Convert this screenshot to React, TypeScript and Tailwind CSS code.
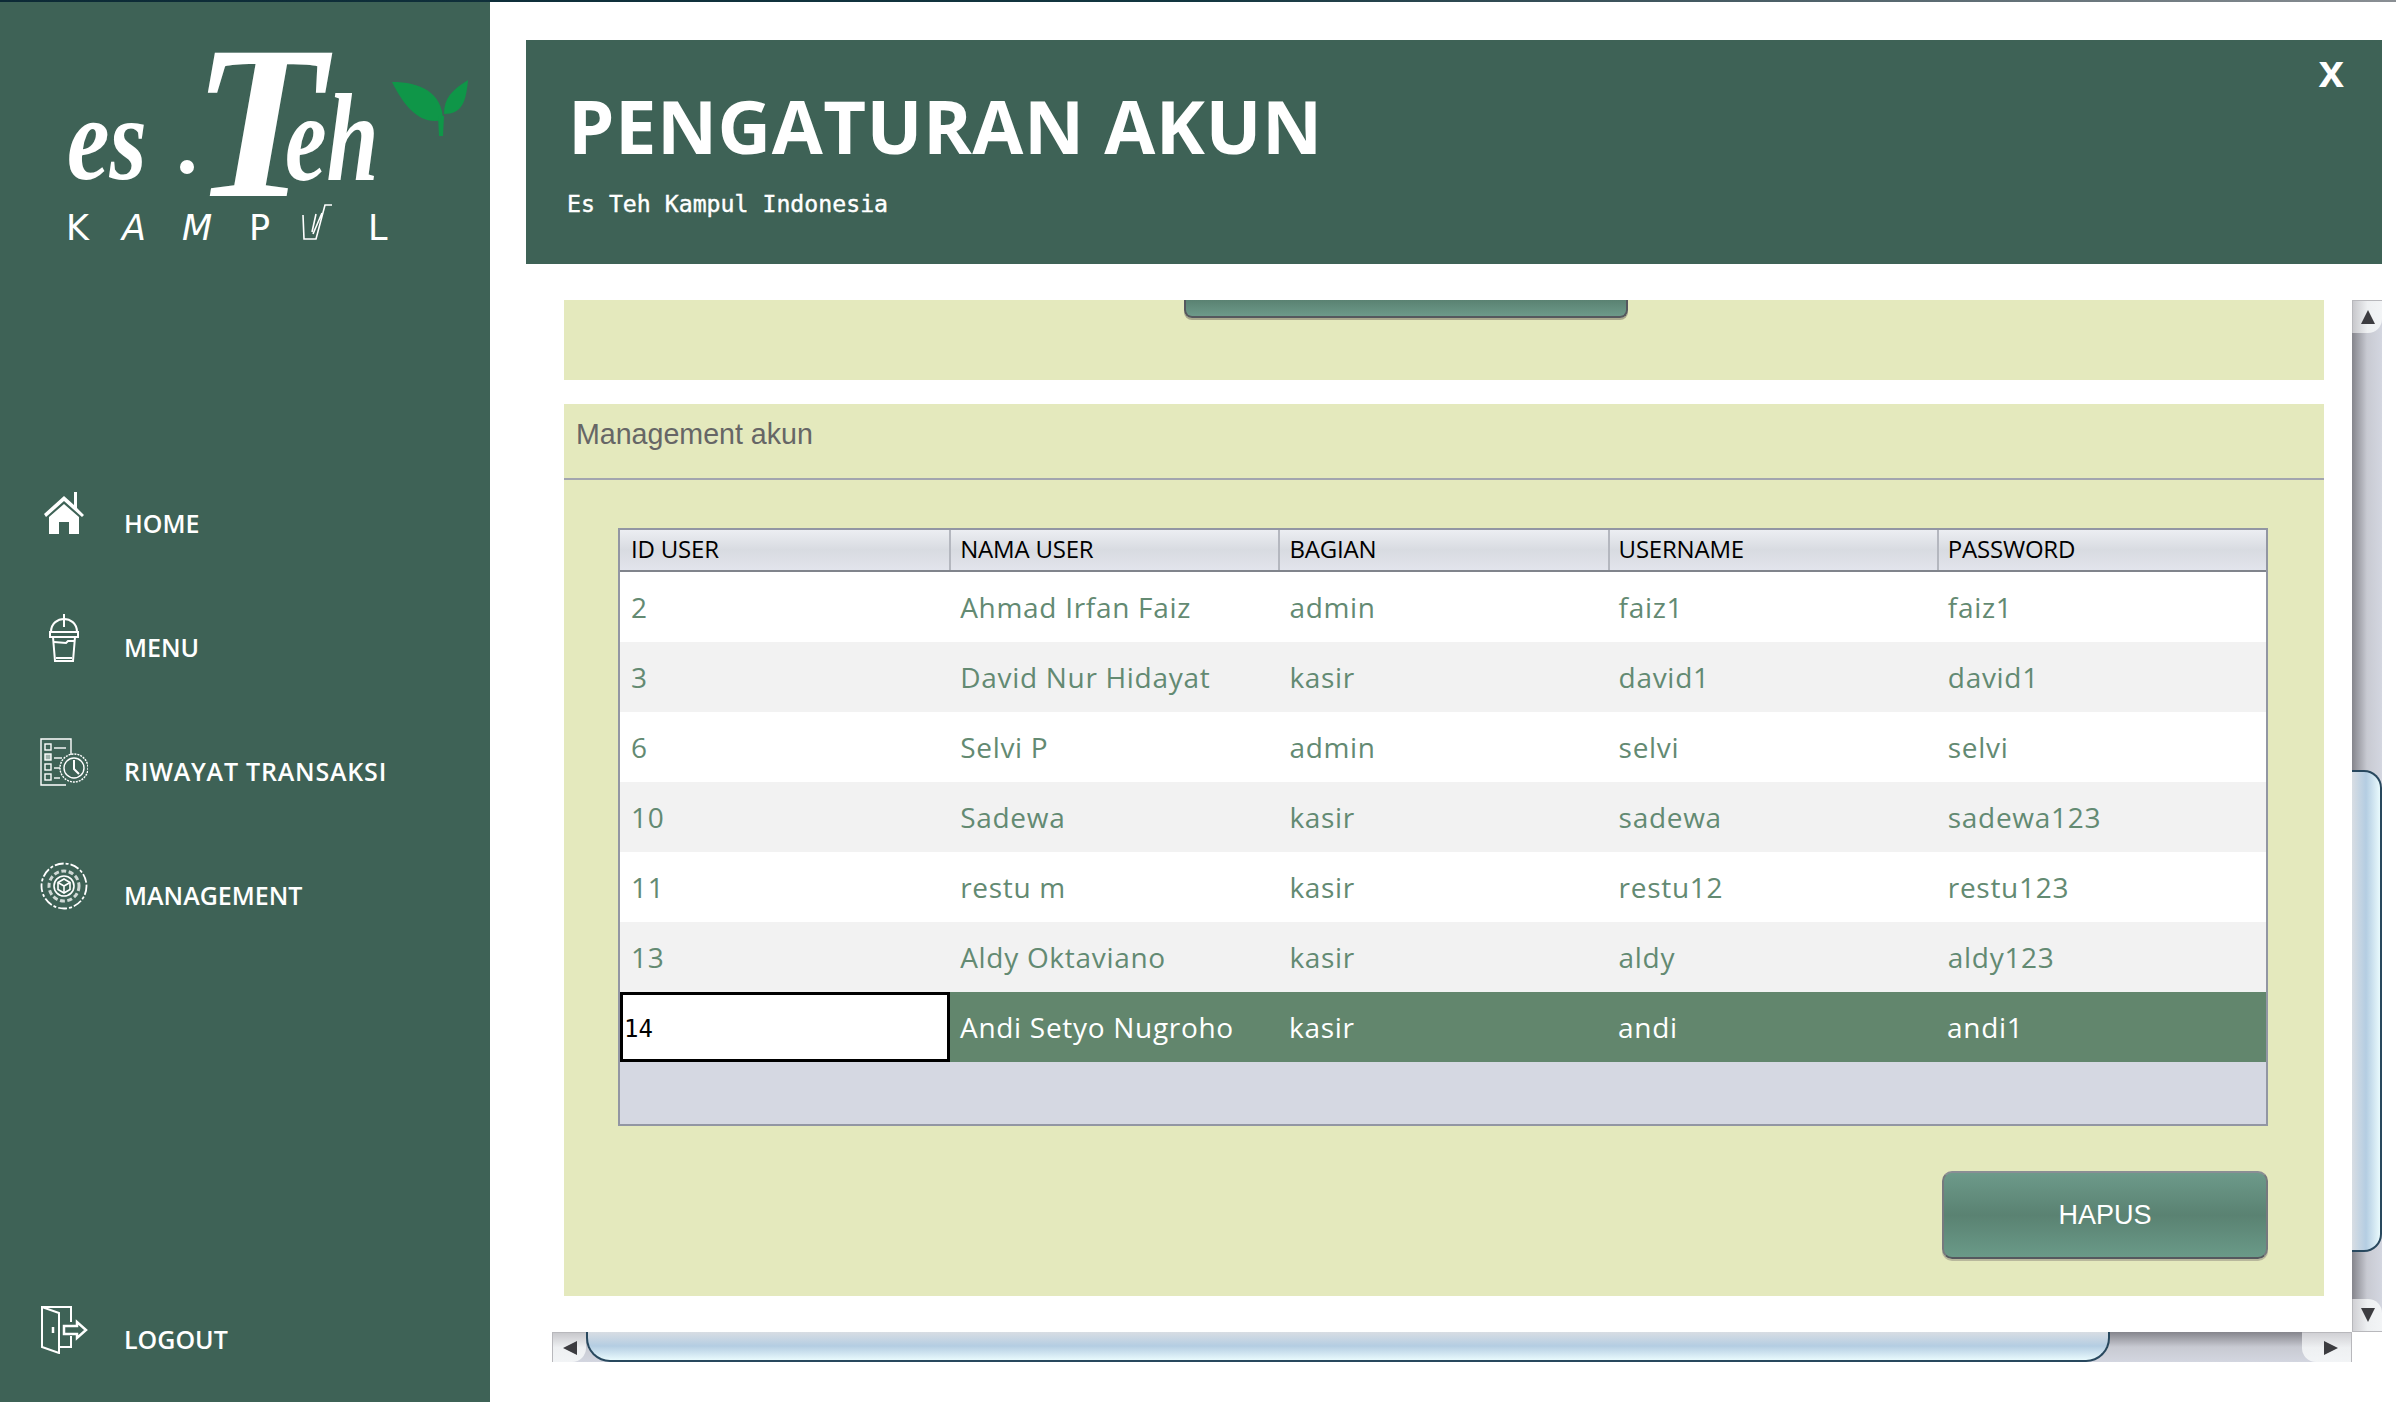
import React from 'react';

const rows = [
  ['2', 'Ahmad Irfan Faiz', 'admin', 'faiz1', 'faiz1'],
  ['3', 'David Nur Hidayat', 'kasir', 'david1', 'david1'],
  ['6', 'Selvi P', 'admin', 'selvi', 'selvi'],
  ['10', 'Sadewa', 'kasir', 'sadewa', 'sadewa123'],
  ['11', 'restu m', 'kasir', 'restu12', 'restu123'],
  ['13', 'Aldy Oktaviano', 'kasir', 'aldy', 'aldy123'],
];
const selected = ['14', 'Andi Setyo Nugroho', 'kasir', 'andi', 'andi1'];
const columns = ['ID USER', 'NAMA USER', 'BAGIAN', 'USERNAME', 'PASSWORD'];

const HomeIcon = () => (
  <svg viewBox="0 0 48 48" className="w-12 h-12" fill="#fff">
    <path d="M4 24 L24 6 L34 15 V2 H37 V18 L44 25 L42 27 L24 11 L6 27 Z" />
    <path fillRule="evenodd" d="M9 27 L24 14 L39 27 V44 H9 Z M19 32 V44 H29 V32 Z" />
  </svg>
);

const CupIcon = () => (
  <svg viewBox="0 0 48 48" className="w-12 h-12" fill="none" stroke="#fff" strokeWidth="2">
    <path d="M24 0 V13" />
    <path d="M11 18 C11 9 18 5 24 5 C30 5 37 9 37 18" />
    <rect x="10" y="18" width="28" height="5" />
    <path d="M13 23 L15 47 H33 L35 23" />
    <path d="M14 28 L26 29 L28 27 L34 27" />
    <path d="M16 44 H32" />
  </svg>
);

const HistoryIcon = () => (
  <svg viewBox="0 0 48 48" className="w-12 h-12" fill="none" stroke="#fff" strokeWidth="1.4">
    <path d="M31 17 V1 H1 V47 H26" />
    <rect x="5" y="6" width="6" height="6" />
    <path d="M14 10 H26" />
    <rect x="5" y="16" width="6" height="6" fill="#fff" fillOpacity="0.5" />
    <path d="M14 20 H22" />
    <rect x="5" y="26" width="6" height="6" />
    <path d="M14 30 H20" />
    <rect x="5" y="36" width="6" height="6" />
    <path d="M14 40 H20" />
    <circle cx="34" cy="30" r="14" strokeDasharray="2 1" />
    <circle cx="34" cy="30" r="10" />
    <path d="M34 22 V31 L39 36" strokeWidth="2" />
  </svg>
);

const GearIcon = () => (
  <svg viewBox="0 0 48 48" className="w-12 h-12" fill="none" stroke="#fff" strokeWidth="1.6">
    <circle cx="24" cy="24" r="22.5" strokeDasharray="9 2 3 2" strokeWidth="1.8" />
    <circle cx="24" cy="24" r="15" strokeDasharray="5 2.5" strokeWidth="3" strokeOpacity="0.75" />
    <circle cx="24" cy="24" r="10" />
    <path d="M24 17 L30 20.5 V27.5 L24 31 L18 27.5 V20.5 Z" />
    <path d="M18 20.5 L24 24 L30 20.5 M24 24 V31" />
  </svg>
);

const DoorIcon = () => (
  <svg viewBox="0 0 48 48" className="w-12 h-12" fill="none" stroke="#fff" strokeWidth="2">
    <path d="M2 1 H31 V16 M31 30 V41 H19" />
    <path d="M2 1 V41 L19 47 V7 Z" />
    <path d="M13 21 V27" strokeWidth="2.5" />
    <path d="M24 20 H37 V16 L46 24 L37 32 V28 H24 Z" strokeWidth="2.5" />
  </svg>
);

const NavItem = ({ icon, label, labelClass = '' }: { icon: React.ReactNode; label: string; labelClass?: string }) => (
  <div className="flex items-start h-[124px] pl-[40px]">
    <div className="w-12 h-12 flex-none">{icon}</div>
    <span className={`ml-[36px] mt-[16px] text-[25px] leading-[34px] font-semibold text-white whitespace-nowrap font-['Open_Sans',sans-serif] ${labelClass}`}>
      {label}
    </span>
  </div>
);

const Logo = () => (
  <svg viewBox="0 0 490 300" className="w-[490px] h-[300px]">
    <g fill="#fff" fontFamily="'Liberation Serif', serif" fontStyle="italic" fontWeight="700">
      <text transform="translate(67 177) scale(0.81 1)" fontSize="118">es</text>
      <circle cx="187" cy="165" r="7" />
      <text x="192" y="194" fontSize="218">T</text>
      <text transform="translate(285 178) scale(0.75 1)" fontSize="125">eh</text>
    </g>
    <g fill="#fff" fontFamily="'DejaVu Sans', sans-serif" fontSize="35">
      <text x="66" y="238">K</text>
      <text x="122" y="238" fontStyle="italic">A</text>
      <text x="182" y="238" fontStyle="italic">M</text>
      <text x="249" y="238">P</text>
      <text x="368" y="238">L</text>
    </g>
    <path d="M303 213 L304 237 H316 L325 203 H332 M322 211 L313 232 M316 212 L312 230" fill="none" stroke="#fff" strokeWidth="1.6" />
    <g fill="#0f9648">
      <path d="M392 80 C420 80 442 90 443 118 C420 124 404 104 392 80 Z" />
      <path d="M468 78 C466 100 462 112 444 112 C444 96 452 88 468 78 Z" />
      <path d="M438 114 H444 L443 134 H439 Z" />
    </g>
  </svg>
);

const ArrowUp = () => <div className="w-0 h-0 border-x-[7px] border-x-transparent border-b-[14px] border-b-[#3c3c40]" />;
const ArrowDown = () => <div className="w-0 h-0 border-x-[7px] border-x-transparent border-t-[14px] border-t-[#3c3c40]" />;
const ArrowLeft = () => <div className="w-0 h-0 border-y-[7px] border-y-transparent border-r-[14px] border-r-[#3c3c40]" />;
const ArrowRight = () => <div className="w-0 h-0 border-y-[7px] border-y-transparent border-l-[14px] border-l-[#3c3c40]" />;

const VerticalScrollbar = () => (
  <div className="flex flex-col h-full bg-gradient-to-r from-[#85858c] via-[#c8cad2] to-[#d3d6e0]">
    <div className="h-[33px] flex-none flex items-center justify-center bg-gradient-to-r from-[#c8c8cc] via-[#eef0f2] to-[#f2f4f6] rounded-br-[14px] border-l border-t border-[#b8b8bc]">
      <ArrowUp />
    </div>
    <div className="h-[437px] flex-none" />
    <div className="h-[482px] flex-none rounded-r-[18px] border-y-2 border-r-2 border-[#28485e] bg-gradient-to-r from-[#d8dde3] via-[#b4cde2] to-[#e9fafd]" />
    <div className="flex-1" />
    <div className="h-[33px] flex-none flex items-center justify-center bg-gradient-to-r from-[#d0d0d4] via-[#eef0f2] to-[#f2f4f6] rounded-tr-[14px] border-l border-b border-[#b8b8bc]">
      <ArrowDown />
    </div>
  </div>
);

const HorizontalScrollbar = () => (
  <div className="flex h-full bg-gradient-to-b from-[#85858c] via-[#c8cad2] to-[#d3d6e0]">
    <div className="w-[34px] flex-none flex items-center justify-center bg-gradient-to-b from-[#c8c8cc] via-[#eef0f2] to-[#f2f4f6] rounded-br-[14px] border-l border-t border-[#b8b8bc]">
      <ArrowLeft />
    </div>
    <div className="w-[1524px] flex-none rounded-b-[24px] border-x-2 border-b-2 border-[#28485e] bg-gradient-to-b from-[#d8dde3] via-[#b4cde2] to-[#e9fafd]" />
    <div className="flex-1" />
    <div className="w-[50px] flex-none flex items-center justify-center pl-2 bg-gradient-to-b from-[#d0d0d4] via-[#eef0f2] to-[#f2f4f6] rounded-bl-[14px] border-r border-t border-[#b8b8bc]">
      <ArrowRight />
    </div>
  </div>
);

export default function App() {
  return (
    <div className="w-[2396px] h-[1402px] overflow-hidden bg-white flex flex-col font-['Open_Sans',sans-serif]">
      {/* top strip from the desktop behind the window */}
      <div className="h-[2px] flex-none bg-gradient-to-r from-[#0c2a36] via-[#123640] to-[#8a8f94]" />

      <div className="flex flex-1 min-h-0">
        {/* Sidebar */}
        <aside className="w-[490px] flex-none bg-[#3e6256] flex flex-col">
          <div className="h-[488px] flex-none">
            <Logo />
          </div>
          <NavItem icon={<HomeIcon />} label="HOME" />
          <NavItem icon={<CupIcon />} label="MENU" />
          <NavItem icon={<HistoryIcon />} label="RIWAYAT TRANSAKSI" labelClass="tracking-[0.8px]" />
          <NavItem icon={<GearIcon />} label="MANAGEMENT" />
          <div className="mt-auto h-[96px] overflow-hidden">
            <NavItem icon={<DoorIcon />} label="LOGOUT" />
          </div>
        </aside>

        {/* Main */}
        <main className="flex-1 min-w-0 pt-[38px] pl-[36px] pr-[14px]">
          <header className="relative h-[224px] bg-[#3e6256] pl-[42px] pt-[41px]">
            <h1 className="text-[74px] leading-[90px] font-bold text-white tracking-[0.5px] font-['Open_Sans',sans-serif]">
              PENGATURAN AKUN
            </h1>
            <p className="mt-[18px] ml-[-1px] text-[23.2px] leading-[30px] text-white font-['DejaVu_Sans_Mono',monospace] [-webkit-text-stroke:0.4px_white]">
              Es Teh Kampul Indonesia
            </p>
            <span className="absolute right-[38px] top-[9px] text-[46px] leading-[44px] font-bold text-white font-['Liberation_Sans',sans-serif]">
              x
            </span>
          </header>

          {/* Scroll pane */}
          <div className="mt-[36px] ml-[26px] grid grid-cols-[1800px_30px] grid-rows-[1032px_30px]">
            <div className="overflow-hidden pl-[12px] pr-[28px]">
              <section className="h-[80px] bg-[#e4e9bd]">
                <div className="ml-[620px] w-[444px] h-[18px] rounded-b-[8px] border-x-2 border-b-2 border-[#55585e] bg-gradient-to-b from-[#5a8272] to-[#6d9a8a] shadow-[0_2px_0_#a8a88c]" />
              </section>

              <section className="mt-[24px] h-[892px] bg-[#e4e9bd] flex flex-col">
                <div className="h-[76px] flex-none flex items-center pl-[12px] pb-[13px] border-b-2 border-[#a2a5ae]">
                  <span className="text-[28.6px] text-[#666666] font-['Liberation_Sans',sans-serif]">Management akun</span>
                </div>

                <div className="mt-[48px] ml-[54px] w-[1650px] h-[598px] flex-none border-2 border-[#9296a3] bg-[#d5d8e2] flex flex-col">
                  <div className="h-[42px] flex-none grid grid-cols-5 border-b-2 border-[#80848c] bg-gradient-to-b from-[#eceef2] via-[#d8dbe1] to-[#e2e4ec]">
                    {columns.map(c => (
                      <div key={c} className="flex items-center pl-[9px] first:pl-[11px] pb-[2px] border-l-2 border-[#b4b7bf] first:border-l-0 text-[24px] text-black tracking-[-0.2px] font-['Open_Sans',sans-serif]">
                        {c}
                      </div>
                    ))}
                  </div>
                  {rows.map((r, i) => (
                    <div key={r[0]} className={`h-[70px] flex-none grid grid-cols-5 ${i % 2 === 0 ? 'bg-white' : 'bg-[#f2f2f2]'}`}>
                      {r.map((v, j) => (
                        <div key={j} className="flex items-center pl-[11px] text-[28px] text-[#638a72] font-['Open_Sans',sans-serif] tracking-[0.7px] whitespace-nowrap">
                          {v}
                        </div>
                      ))}
                    </div>
                  ))}
                  <div className="h-[70px] flex-none grid grid-cols-[330px_329px_329px_329px_1fr] bg-[#62866d]">
                    <div className="flex items-center pl-[1px] pt-[3px] bg-white border-[3px] border-black text-[24px] text-black font-['DejaVu_Sans_Mono',monospace]">
                      {selected[0]}
                    </div>
                    {selected.slice(1).map((v, j) => (
                      <div key={j} className="flex items-center pl-[10px] text-[28px] text-white font-['Open_Sans',sans-serif] tracking-[0.7px] whitespace-nowrap">
                        {v}
                      </div>
                    ))}
                  </div>
                </div>

                <div className="mt-[45px] mr-[56px] flex justify-end">
                  <button className="w-[326px] h-[88px] rounded-[10px] border-2 border-t-[#8a8e94] border-x-[#76797e] border-b-[#55585e] bg-gradient-to-b from-[#6d9a8a] via-[#5a8272] to-[#6a9a88] shadow-[0_2px_0_#b8b89c] text-[27px] text-white font-['Liberation_Sans',sans-serif]">
                    HAPUS
                  </button>
                </div>
              </section>
            </div>

            <VerticalScrollbar />
            <HorizontalScrollbar />
          </div>
        </main>
      </div>
    </div>
  );
}
